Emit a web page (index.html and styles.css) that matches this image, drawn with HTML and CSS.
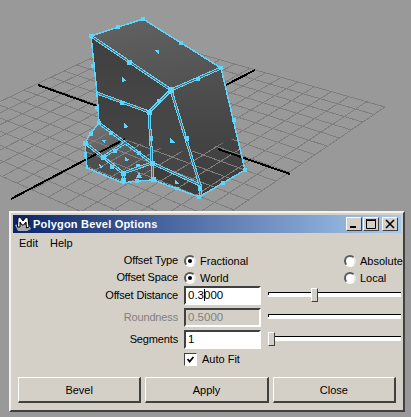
FILE: index.html
```html
<!DOCTYPE html>
<html lang="en">
<head>
  <meta charset="UTF-8">
  <title>Polygon Bevel Options</title>
  <link rel="stylesheet" href="styles.css">
</head>
<body>
  <svg class="scene" width="411" height="211" viewBox="0 0 411 211" shape-rendering="crispEdges">
    <defs>
      <linearGradient id="topFace" x1="0" y1="0" x2="0.3" y2="1">
        <stop offset="0" stop-color="#626262"/>
        <stop offset="1" stop-color="#535353"/>
      </linearGradient>
      <linearGradient id="sideFace" x1="0" y1="0" x2="0" y2="1">
        <stop offset="0" stop-color="#3f3f3f"/>
        <stop offset="1" stop-color="#474747"/>
      </linearGradient>
      <linearGradient id="rightFace" x1="0" y1="0" x2="0" y2="1">
        <stop offset="0" stop-color="#525252"/>
        <stop offset="0.5" stop-color="#454545"/>
        <stop offset="1" stop-color="#3c3c3c"/>
      </linearGradient>
      <linearGradient id="lowFace" x1="0" y1="0" x2="0.4" y2="1">
        <stop offset="0" stop-color="#767676"/>
        <stop offset="1" stop-color="#4c4c4c"/>
      </linearGradient>
      <clipPath id="overClip">
        <polygon points="84,128 130,141 175,152 205,150 246,134 250,175 200,200 84,178"/>
      </clipPath>
    </defs>

    <g id="grid" class="grid-lines"></g>

    <!-- axes behind the mesh -->
    <path class="axis" d="M38 85 L97 106 M226 85 L255 70"/>

    <!-- faces -->
    <polygon fill="url(#topFace)" points="91,36 143,19 221,68 171,90"/>
    <polygon fill="url(#sideFace)" points="91,36 171,90 149,112 97,93"/>
    <polygon fill="url(#sideFace)" points="97,93 149,112 152,163 99,123"/>
    <polygon fill="#464646" points="171,90 200,185 152,163 149,112"/>
    <polygon fill="url(#rightFace)" points="171,90 221,68 245,170 200,197 200,185"/>
    <polygon fill="url(#lowFace)" points="99,123 152,163 153,180 123,183 87,168 85,143"/>
    <polygon fill="#4e4e4e" points="85,143 103,157 123,173 123,183 87,168"/>
    <polygon fill="#3e3e3e" points="152,163 200,185 200,197 153,180"/>

    <use href="#grid" clip-path="url(#overClip)"/>

    <!-- axes in front of the mesh -->
    <path class="axis" d="M11 199 L125 139 M218 149 L290 174"/>

    <!-- double edges -->
    <path class="edge-wide" d="M91 36 L171 90 L149 112 L152 163 M171 90 L221 68 M171 90 L200 185 M97 93 L149 112 M99 123 L152 163 M152 163 L200 185 L200 197 M123 173 L152 163 M85 143 L103 157 L123 173 L123 183 M125 143 L103 157 M152 163 L153 180"/>
    <path class="edge-core" d="M91 36 L171 90 L149 112 L152 163 M171 90 L221 68 M171 90 L200 185 M97 93 L149 112 M99 123 L152 163 M152 163 L200 185 L200 197 M123 173 L152 163 M85 143 L103 157 L123 173 L123 183 M125 143 L103 157 M152 163 L153 180"/>

    <!-- outline -->
    <path class="edge" d="M91 36 L143 19 L221 68 L245 170 L199 197 L153 180 L137 181 L123 183 L87 168 L85 143 L90 134 L99 123 L97 93 L91 36"/>

    <!-- vertex and edge handles -->
    <g class="handles">
      <rect x="89" y="34" width="4" height="4"/><rect x="141" y="17" width="4" height="4"/>
      <rect x="219" y="66" width="4" height="4"/><rect x="116" y="25" width="4" height="4"/>
      <rect x="179" y="41" width="4" height="4"/><rect x="127" y="60" width="5" height="5"/>
      <rect x="196" y="77" width="4" height="4"/><rect x="91" y="64" width="4" height="4"/>
      <rect x="120" y="101" width="4" height="4"/><rect x="157" y="99" width="4" height="4"/>
      <rect x="95" y="106" width="4" height="4"/><rect x="168" y="87" width="6" height="6"/>
      <rect x="147" y="110" width="5" height="5"/><rect x="149" y="136" width="4" height="5"/>
      <rect x="185" y="136" width="4" height="5"/><rect x="232" y="118" width="4" height="4"/>
      <rect x="243" y="168" width="4" height="4"/><rect x="221" y="181" width="4" height="4"/>
      <rect x="198" y="186" width="4" height="5"/><rect x="197" y="195" width="4" height="4"/>
      <rect x="97" y="121" width="4" height="4"/><rect x="109" y="131" width="4" height="4"/>
      <rect x="89" y="132" width="4" height="4"/><rect x="83" y="141" width="5" height="5"/>
      <rect x="84" y="152" width="3" height="5"/><rect x="137" y="151" width="4" height="4"/>
      <rect x="113" y="149" width="4" height="4"/><rect x="101" y="155" width="5" height="5"/>
      <rect x="150" y="161" width="5" height="5"/><rect x="121" y="171" width="5" height="5"/>
      <rect x="121" y="178" width="5" height="5"/><rect x="135" y="179" width="4" height="4"/>
      <rect x="151" y="177" width="5" height="5"/><rect x="175" y="187" width="4" height="3"/>
      <rect x="110" y="165" width="4" height="4"/><rect x="136" y="164" width="4" height="3"/>
    </g>
    <g class="handles">
      <polygon points="154,50 159,50 159,54"/><polygon points="122,77 126,81 122,82"/>
      <polygon points="124,123 129,127 124,128"/><polygon points="170,138 175,143 170,143"/>
      <polygon points="139,172 142,178 136,178"/><polygon points="175,179 179,184 175,184"/>
      <polygon points="125,157 130,160 125,161"/><polygon points="101,140 106,140 105,143"/>
      <polygon points="99,164 104,167 100,168"/>
    </g>
  </svg>

  <div class="dialog">
    <div class="titlebar">
      <svg class="title-icon" width="16" height="16" viewBox="0 0 16 16">
        <path d="M0 9 L4 8 L14 9 L16 13 L12 15 L3 15 Z" fill="#a8a8a8"/>
        <path d="M2.5 11 L3 2 L5 1 L8 5 L11 1 L13 2 L14 11 L11.5 12 L11 6 L8.5 9 L7 9 L5 6 L5 11 Z" fill="#fff" stroke="#000"/>
      </svg>
      <span class="title-text">Polygon Bevel Options</span>
      <div class="win-buttons">
        <button class="win-btn">
          <svg width="10" height="10" viewBox="0 0 10 10"><rect x="1" y="7" width="6" height="2"/></svg>
        </button>
        <button class="win-btn">
          <svg width="10" height="10" viewBox="0 0 10 10"><path d="M0.5 1.5 H9.5 V9.5 H0.5 Z M0 1 H10 V0 H0 Z" fill="none" stroke="#000"/></svg>
        </button>
        <button class="win-btn win-close">
          <svg width="10" height="10" viewBox="0 0 10 10"><path d="M1 1 L9 9 M9 1 L1 9" stroke="#000" stroke-width="1.6" fill="none"/></svg>
        </button>
      </div>
    </div>

    <div class="menubar">
      <span class="menu-item">Edit</span>
      <span class="menu-item">Help</span>
    </div>

    <div class="form">
      <div class="label">Offset Type</div>
      <label class="radio"><span class="radio-dot checked"></span>Fractional</label>
      <label class="radio radio-right"><span class="radio-dot"></span>Absolute</label>

      <div class="label">Offset Space</div>
      <label class="radio"><span class="radio-dot checked"></span>World</label>
      <label class="radio radio-right"><span class="radio-dot"></span>Local</label>

      <div class="label field-label">Offset Distance</div>
      <div class="field">0.3<span class="caret"></span>000</div>
      <div class="slider"><div class="track"></div><div class="thumb" style="left: 32%"></div></div>

      <div class="label field-label disabled">Roundness</div>
      <div class="field field-disabled">0.5000</div>
      <div class="slider"><div class="track"></div></div>

      <div class="label field-label">Segments</div>
      <div class="field">1</div>
      <div class="slider"><div class="track"></div><div class="thumb" style="left: 0"></div></div>

      <div></div>
      <label class="check">
        <svg class="check-box" width="13" height="13" viewBox="0 0 13 13"><path d="M3 6 L5.5 9 L10 3.5" fill="none" stroke="#000" stroke-width="2"/></svg>
        Auto Fit
      </label>
    </div>

    <div class="actions">
      <button class="action">Bevel</button>
      <button class="action">Apply</button>
      <button class="action">Close</button>
    </div>
  </div>

  <script src="grid.js"></script>
</body>
</html>
```

FILE: styles.css
```css
body {
  margin: 0;
  width: 411px;
  height: 417px;
  overflow: hidden;
  background-color: #999;
  font-family: "Liberation Sans", Arial, sans-serif;
  font-size: 11px;
  color: #000;
}

.scene { display: block; }
.grid-lines line { stroke: #7e7e7e; stroke-width: 1; }
.axis { stroke: #000; stroke-width: 2; fill: none; }
.edge { stroke: #5cd6ff; stroke-width: 1.5; fill: none; }
.edge-wide { stroke: #5cd6ff; stroke-width: 3; fill: none; }
.edge-core { stroke: #666; stroke-width: 1; fill: none; }
.handles { fill: #5cd6ff; }

.dialog {
  box-sizing: border-box;
  width: 396px;
  height: 201px;
  margin-left: 9px;
  padding: 2px;
  background-color: #d4d0c8;
  border: 2px solid;
  border-color: #f4f2ee #404040 #404040 #f4f2ee;
}

.titlebar {
  display: flex;
  align-items: center;
  height: 18px;
  padding: 0 3px 0 2px;
  background: linear-gradient(to right, #0a246a, #a6caf0);
}
.title-icon { flex: none; }
.title-text {
  margin-left: 2px;
  color: #fff;
  font-size: 11px;
  font-weight: bold;
  letter-spacing: 0.2px;
  white-space: nowrap;
}
.win-buttons { display: flex; gap: 1px; margin-left: auto; }
.win-btn {
  display: flex;
  align-items: center;
  justify-content: center;
  box-sizing: border-box;
  width: 16px;
  height: 14px;
  padding: 0;
  background-color: #d4d0c8;
  border: 1px solid;
  border-color: #fff #404040 #404040 #fff;
}
.win-close { margin-left: 2px; }

.menubar {
  display: flex;
  gap: 12px;
  height: 19px;
  padding: 3px 0 0 6px;
  box-sizing: border-box;
  line-height: 15px;
}

.form {
  display: grid;
  grid-template-columns: 165px 78px 133px;
  grid-template-rows: 17px 17px 22px 22px 22px 20px;
  column-gap: 6px;
}

.label { text-align: right; line-height: 17px; letter-spacing: -0.15px; }
.field-label { line-height: 19px; }
.disabled { color: #808080; }

.radio { display: flex; align-items: center; gap: 4px; height: 17px; white-space: nowrap; }
.radio-right { margin-left: 76px; }
.radio-dot {
  position: relative;
  flex: none;
  box-sizing: border-box;
  width: 12px;
  height: 12px;
  background-color: #fff;
  border: 2px solid;
  border-color: #5a5a5a #e8e8e8 #fff #5a5a5a;
  border-radius: 50%;
}
.radio-dot.checked::after {
  content: "";
  position: absolute;
  left: 2px;
  top: 2px;
  width: 4px;
  height: 4px;
  background-color: #000;
  border-radius: 50%;
}

.field {
  box-sizing: border-box;
  width: 77px;
  height: 19px;
  padding-left: 2px;
  font-size: 11.5px;
  line-height: 15px;
  background-color: #fff;
  border: 2px solid;
  border-color: #404040 #fff #fff #404040;
  white-space: nowrap;
}
.field-disabled { background-color: #d4d0c8; color: #808080; }
.caret { border-left: 1px solid #000; margin-right: -1px; }

.slider { position: relative; height: 19px; }
.track {
  position: relative;
  box-sizing: border-box;
  height: 5px;
  margin-top: 6px;
  background-color: #fff;
  border-top: 1px solid #000;
}
.track::before {
  content: "";
  position: absolute;
  left: 0;
  top: 0;
  width: 1px;
  height: 2px;
  background-color: #000;
}
.thumb {
  position: absolute;
  top: 2px;
  box-sizing: border-box;
  width: 7px;
  height: 14px;
  background-color: #d4d0c8;
  border: 1px solid;
  border-color: #fff #404040 #404040 #fff;
}

.check { display: flex; align-items: center; gap: 5px; height: 14px; }
.check-box {
  flex: none;
  box-sizing: border-box;
  background-color: #fff;
  border: 1px solid;
  border-color: #404040 #fff #fff #404040;
}

.actions { display: flex; gap: 4px; margin-top: 5px; padding: 0 5px; }
.action {
  flex: 1;
  height: 26px;
  padding: 0;
  font: inherit;
  background-color: #d4d0c8;
  border: 2px solid;
  border-color: #fff #404040 #404040 #fff;
  border-top-width: 1px;
  border-left-width: 1px;
}
```

FILE: grid.js
```js
// ground grid: 16 x 16 cells, drawn in perspective from the four corners
const corners = [[-80, 140], [137, 36], [385, 107], [172, 252]];
const cells = 16;

function projector(q) {
  const [x0, y0] = q[0], [x1, y1] = q[1], [x2, y2] = q[2], [x3, y3] = q[3];
  const dx1 = x1 - x2, dx2 = x3 - x2, sx = x0 - x1 + x2 - x3;
  const dy1 = y1 - y2, dy2 = y3 - y2, sy = y0 - y1 + y2 - y3;
  const den = dx1 * dy2 - dx2 * dy1;
  const g = (sx * dy2 - dx2 * sy) / den;
  const h = (dx1 * sy - sx * dy1) / den;
  const a = x1 - x0 + g * x1, b = x3 - x0 + h * x3;
  const d = y1 - y0 + g * y1, e = y3 - y0 + h * y3;
  return (u, v) => {
    const w = g * u + h * v + 1;
    return [(a * u + b * v + x0) / w, (d * u + e * v + y0) / w];
  };
}

const project = projector(corners);
const grid = document.getElementById('grid');

function addLine(p, q) {
  const line = document.createElementNS('http://www.w3.org/2000/svg', 'line');
  line.setAttribute('x1', p[0].toFixed(1));
  line.setAttribute('y1', p[1].toFixed(1));
  line.setAttribute('x2', q[0].toFixed(1));
  line.setAttribute('y2', q[1].toFixed(1));
  grid.appendChild(line);
}

for (let i = 0; i <= cells; i++) {
  const t = i / cells;
  addLine(project(t, 0), project(t, 1));
  addLine(project(0, t), project(1, t));
}
```
